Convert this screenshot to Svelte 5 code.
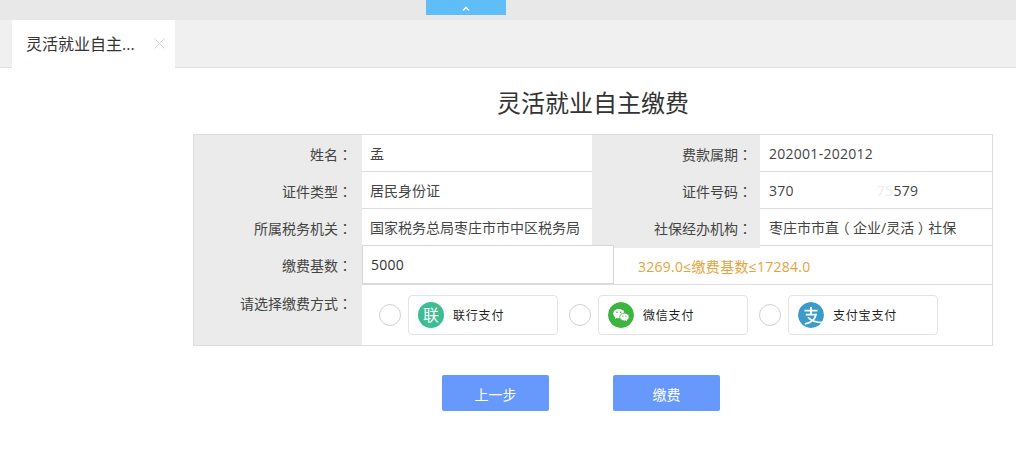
<script>
  const rows = [
    ["姓名", "孟", "费款属期", "202001-202012"],
    ["证件类型", "居民身份证", "证件号码", null],
    ["所属税务机关", "国家税务总局枣庄市市中区税务局", "社保经办机构", ""],
  ];
  const payments = [
    { id: "union", name: "联行支付" },
    { id: "wechat", name: "微信支付" },
    { id: "alipay", name: "支付宝支付" },
  ];
</script>

<div class="top">
  <div class="toggle">
    <svg width="8" height="5" viewBox="0 0 8 5"><path d="M1 4.5 4 1.5 7 4.5" fill="none" stroke="#fff" stroke-width="1.4" /></svg>
  </div>
</div>

<div class="tabbar">
  <div class="tab">
    <span>灵活就业自主...</span>
    <svg class="close" width="11" height="11" viewBox="0 0 11 11"><path d="M0.5 0.5 10.5 10.5M10.5 0.5 0.5 10.5" stroke="#d4d4d4" stroke-width="1" /></svg>
  </div>
</div>

<main>
  <h1>灵活就业自主缴费</h1>

  <div class="form">
    {#each rows as row}
      <div class="row">
        <div class="label">{row[0]}<span class="tc">：</span></div>
        <div class="value">{row[1]}</div>
        <div class="label second">{row[2]}<span class="tc">：</span></div>
        {#if row[3] === null}
          <div class="value num"><span>370</span><span class="faint">75</span><span>579</span></div>
        {:else if row[3] === ""}
          <div class="value">枣庄市市直<span class="paren">（</span>企业/灵活<span class="paren">）</span>社保</div>
        {:else}
          <div class="value num">{row[3]}</div>
        {/if}
      </div>
    {/each}

    <div class="row base">
      <div class="label">缴费基数<span class="tc">：</span></div>
      <input class="amount" value="5000" />
      <div class="range num">3269.0≤缴费基数≤17284.0</div>
    </div>

    <div class="row pay">
      <div class="label">请选择缴费方式<span class="tc">：</span></div>
      <div class="methods">
        {#each payments as p}
          <div class="method">
            <span class="radio"></span>
            <div class="card">
              {#if p.id === "union"}
                <span class="logo union">联</span>
              {:else if p.id === "wechat"}
                <svg class="logo" viewBox="0 0 26 26">
                  <circle cx="13" cy="13" r="13" fill="#3bb53f" />
                  <ellipse cx="10.8" cy="11.6" rx="5.6" ry="4.7" fill="#fff" />
                  <path d="M7.6 14.5 7 17l2.6-1.4z" fill="#fff" />
                  <ellipse cx="16.4" cy="15" rx="4.7" ry="3.9" fill="#fff" stroke="#3bb53f" stroke-width="0.8" />
                  <path d="M18.6 17.6 19.2 19.4 17.3 18.3z" fill="#fff" />
                  <circle cx="9" cy="10.3" r="0.8" fill="#3bb53f" />
                  <circle cx="12.6" cy="10.3" r="0.8" fill="#3bb53f" />
                  <circle cx="14.9" cy="14.2" r="0.6" fill="#3bb53f" />
                  <circle cx="17.9" cy="14.2" r="0.6" fill="#3bb53f" />
                </svg>
              {:else}
                <svg class="logo" viewBox="0 0 26 26">
                  <circle cx="13" cy="13" r="13" fill="#3a9ccb" />
                  <path d="M6.5 8.6H19.5M13 5V12.4M7.8 12.6H18C16.8 17.6 12.6 21 6.8 21.8M10 15.2C12.6 18.4 18 20.4 26 20.6" fill="none" stroke="#fff" stroke-width="1.8" />
                </svg>
              {/if}
              <span class="name">{p.name}</span>
            </div>
          </div>
        {/each}
      </div>
    </div>
  </div>

  <div class="actions">
    <button>上一步</button>
    <button>缴费</button>
  </div>
</main>

<style>
  :global(body) {
    margin: 0;
    background: #fff;
    font-family: "Open Sans", "Noto Sans CJK SC", sans-serif;
    font-size: 14px;
    color: #333;
  }

  .top {
    height: 20px;
    background: #e8e8e8;
    display: flex;
    padding-left: 426px;
  }

  .toggle {
    width: 80px;
    height: 15px;
    background: #5fbdf8;
    display: flex;
    justify-content: center;
    align-items: center;
    padding-top: 1px;
    box-sizing: border-box;
  }

  .tabbar {
    height: 48px;
    box-sizing: border-box;
    background: #f0f0f0;
    border-bottom: 1px solid #dedede;
    padding-left: 12px;
    display: flex;
  }

  .tab {
    width: 163px;
    height: 48px;
    background: #fff;
    box-sizing: border-box;
    padding: 0 10px 2px 14px;
    display: flex;
    align-items: center;
    justify-content: space-between;
    font-size: 16px;
    color: #333;
  }

  main {
    width: 800px;
    margin-left: 193px;
  }

  h1 {
    margin: 0;
    height: 66px;
    line-height: 70px;
    text-align: center;
    font-size: 24px;
    font-weight: 400;
    color: #333;
  }

  .form {
    border: 1px solid #ddd;
    border-bottom: 0;
    box-sizing: border-box;
  }

  .row {
    display: grid;
    grid-template-columns: 168px 230px 168px 1fr;
    height: 37px;
    border-bottom: 1px solid #ddd;
    box-sizing: border-box;
    line-height: 38px;
    color: #444;
  }

  .label {
    background: #ebebeb;
    text-align: right;
    padding-right: 10px;
  }

  .label.second {
    padding-right: 8px;
  }

  .tc {
    font-family: "Noto Sans CJK TC", sans-serif;
  }

  .paren {
    font-feature-settings: "halt";
    padding: 0 3.5px;
  }

  .num {
    letter-spacing: 0.27px;
  }

  .value {
    padding-left: 8px;
    white-space: nowrap;
    overflow: hidden;
  }

  .second + .value {
    padding-left: 9px;
  }

  .faint {
    margin-left: 83px;
    color: #ececec;
  }

  .base {
    height: 39px;
    grid-template-columns: 168px 252px 1fr;
    line-height: 38px;
  }

  .amount {
    height: 39px;
    box-sizing: border-box;
    margin: -1px 0 0 0;
    width: 252px;
    border: 1px solid #d8d8d8;
    padding: 0 8px;
    font: inherit;
    letter-spacing: 0.27px;
    color: #333;
    outline: none;
  }

  .range {
    padding: 2px 0 0 24px;
    color: #e6a23c;
  }

  .pay {
    height: 61px;
    grid-template-columns: 168px 1fr;
    line-height: 36px;
  }

  .methods {
    display: flex;
    padding: 10px 0 0 17px;
    gap: 11px;
  }

  .method {
    display: flex;
    gap: 7px;
    align-items: center;
    height: 40px;
  }

  .radio {
    width: 22px;
    height: 22px;
    box-sizing: border-box;
    border: 1px solid #d0d0d0;
    border-radius: 50%;
    background: #fff;
  }

  .card {
    width: 150px;
    height: 40px;
    box-sizing: border-box;
    border: 1px solid #e4e4e4;
    border-radius: 4px;
    padding-left: 9px;
    display: flex;
    align-items: center;
    gap: 9px;
  }

  .logo {
    width: 26px;
    height: 26px;
    border-radius: 50%;
    flex: none;
  }

  .union {
    background: #3dbd91;
    color: #fff;
    font-size: 16px;
    line-height: 26px;
    text-align: center;
  }

  .name {
    font-size: 12px;
    line-height: 20px;
    padding-top: 2px;
    color: #222;
    letter-spacing: 0.8px;
  }

  .actions {
    display: flex;
    gap: 64px;
    margin: 29px 0 0 249px;
  }

  button {
    width: 107px;
    height: 36px;
    border: 0;
    border-radius: 2px;
    background: #6699fb;
    color: #fff;
    font: inherit;
    padding: 2px 0 0;
  }
</style>
